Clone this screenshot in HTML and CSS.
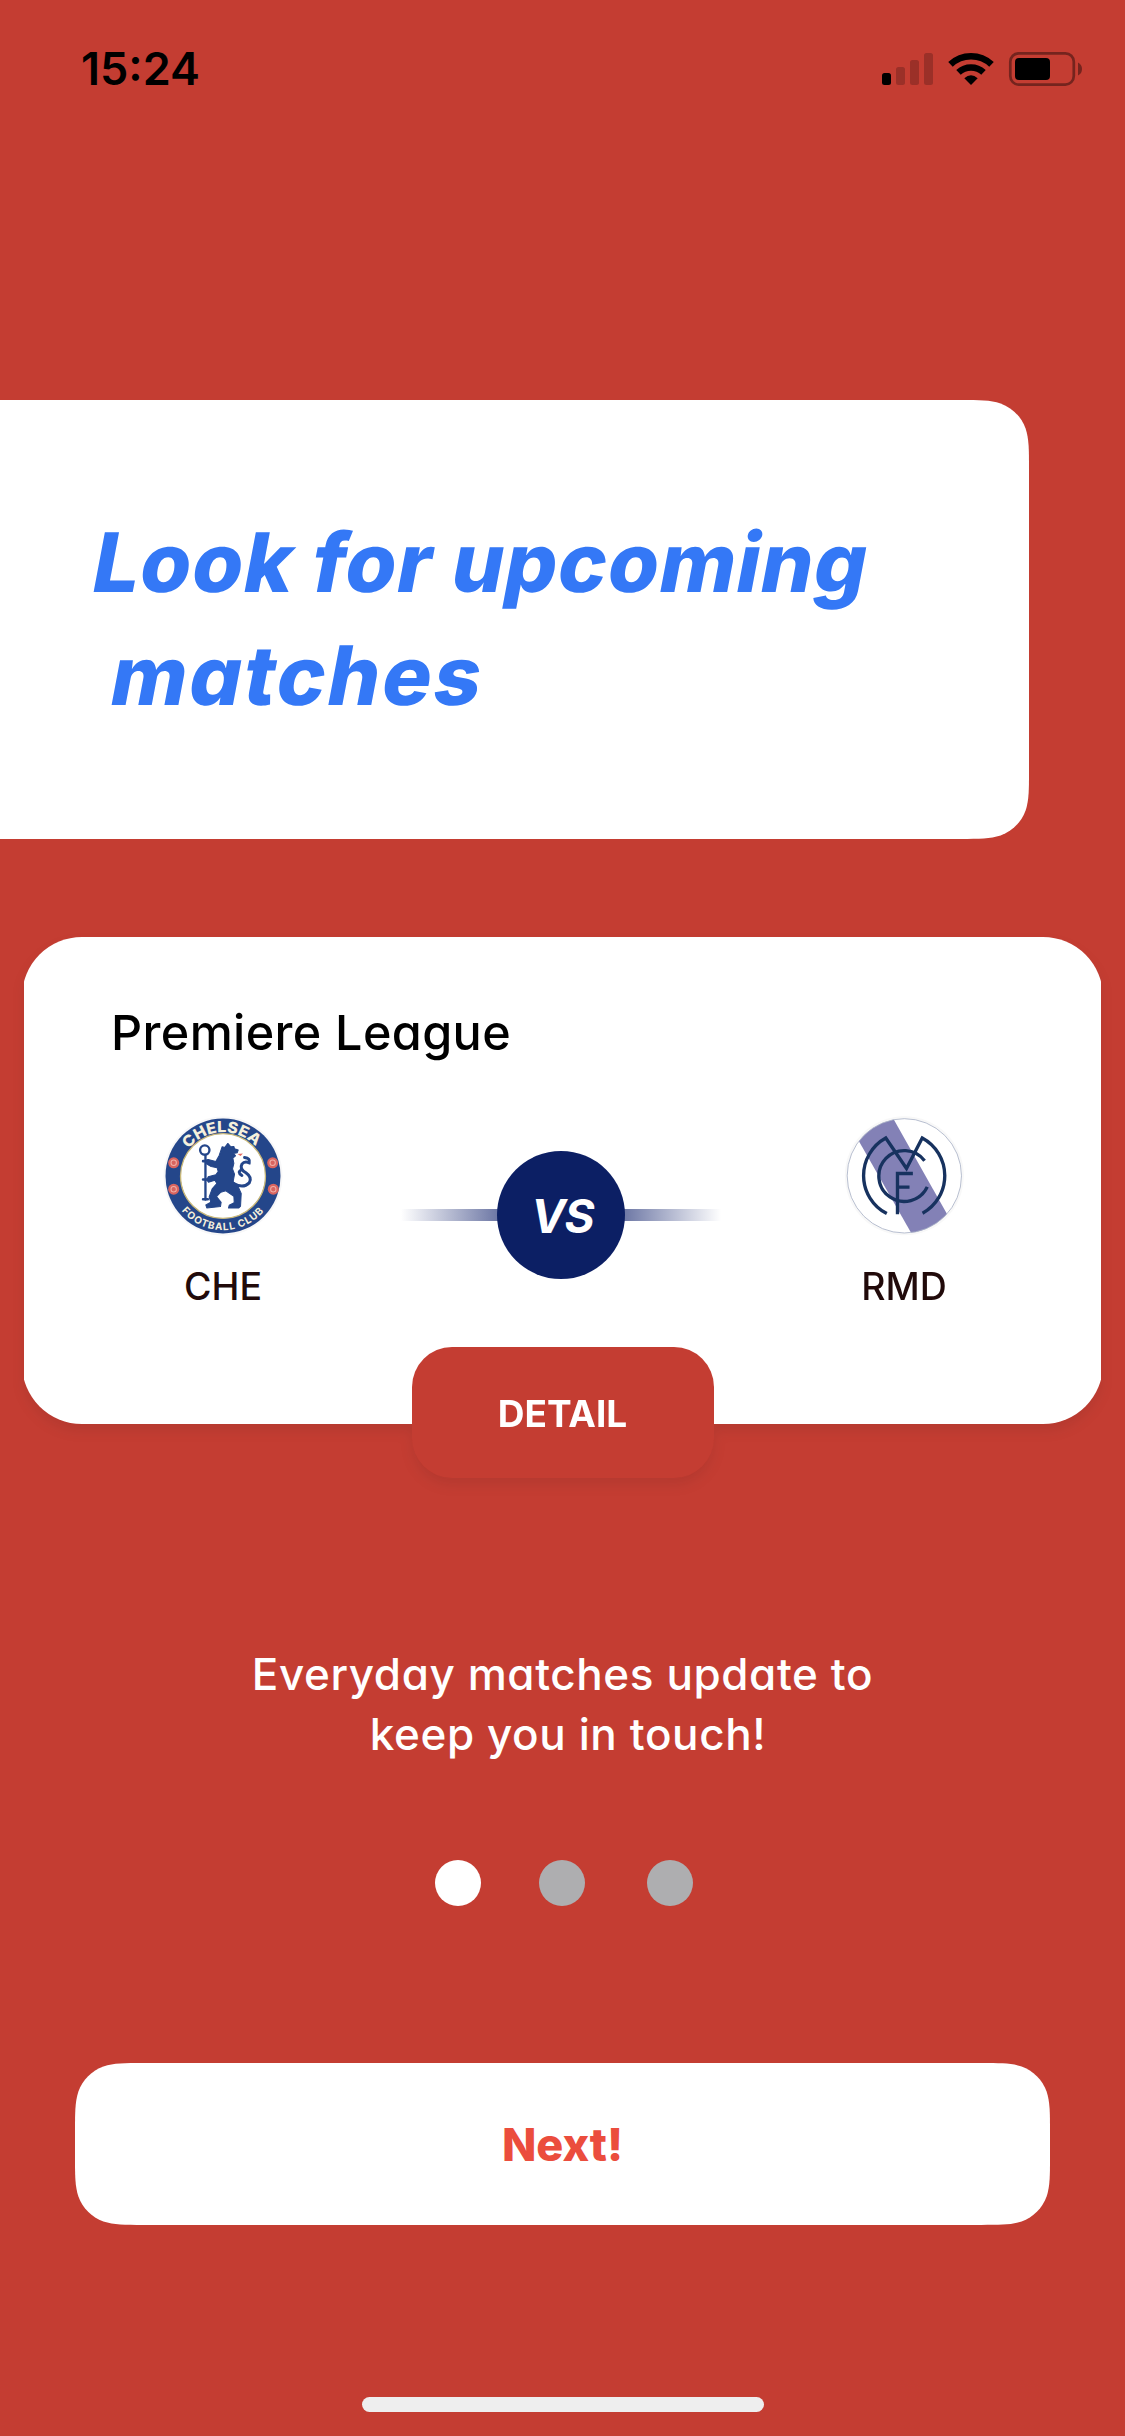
FILE: index.html
```html
<!DOCTYPE html>
<html lang="en">
<head>
<meta charset="utf-8">
<title>Upcoming matches</title>
<link rel="stylesheet" href="styles.css">
</head>
<body>
<div class="screen">
  <header class="status">
    <span class="status-time">15:24</span>
    <svg class="status-icons" viewBox="882 50 202 38" aria-hidden="true">
      <rect x="882" y="73" width="9" height="12" rx="2.5"/>
      <g fill="#9b3028">
        <rect x="896" y="67" width="9" height="18" rx="2.5"/>
        <rect x="910" y="60" width="9" height="25" rx="2.5"/>
        <rect x="924" y="53" width="9" height="32" rx="2.5"/>
      </g>
      <g fill="none" stroke="#000" stroke-width="6.6">
        <path d="M950.5 64.3A30 30 0 0 1 991.500 64.3"/>
        <path d="M958.500 72.400A18.500 18.500 0 0 1 983.500 72.400"/>
      </g>
      <path d="M964.300 78.300Q971 72 977.700 78.300L971 85Z"/>
      <rect x="1010.300" y="53.300" width="63.500" height="31.300" rx="8.500" fill="none" stroke="#75241e" stroke-width="2.700"/>
      <rect x="1015" y="58" width="35" height="22" rx="4"/>
      <path d="M1078 62.500Q1082 64.500 1082 69T1078 75.500Z" fill="#75241e"/>
    </svg>
  </header>

  <section class="hero">
    <h1 class="hero-title"><span class="hero-line line-one">Look for upcoming</span><span class="hero-line line-two">matches</span></h1>
  </section>

  <section class="match">
    <div class="match-card">
      <h2 class="league">Premiere League</h2>
      <div class="teams">
        <div class="team">
          <svg class="crest" viewBox="40 48 359 359" role="img" aria-label="Chelsea">
            <defs>
              <path id="arcTop" d="M116.300 146.800A131 131 0 0 1 322.700 146.800"/>
              <path id="arcBottom" d="M95.400 331.600A162 162 0 0 0 343.600 331.600"/>
            </defs>
            <circle cx="219.500" cy="227.500" r="178" fill="#f7f7f8"/>
            <circle cx="219.500" cy="227.500" r="172" fill="#24468a"/>
            <circle cx="219.500" cy="227.500" r="127" fill="#fff" stroke="#c9b878" stroke-width="4"/>
            <text class="crest-name" textLength="228" lengthAdjust="spacingAndGlyphs"><textPath href="#arcTop">CHELSEA</textPath></text>
            <text class="crest-club" textLength="280" lengthAdjust="spacing"><textPath href="#arcBottom">FOOTBALL CLUB</textPath></text>
            <g fill="#d9645f">
              <circle cx="72" cy="188" r="16.500"/><circle cx="72" cy="267" r="16.500"/>
              <circle cx="368" cy="188" r="16.500"/><circle cx="370" cy="267" r="16.500"/>
            </g>
            <g fill="none" stroke="#efb0a8" stroke-width="3">
              <circle cx="72" cy="188" r="8"/><circle cx="72" cy="267" r="8"/>
              <circle cx="368" cy="188" r="8"/><circle cx="370" cy="267" r="8"/>
            </g>
            <g fill="none" stroke="#24468a" stroke-linecap="round">
              <circle cx="165" cy="150" r="14" stroke-width="7"/>
              <path d="M167 165V298" stroke-width="7"/>
              <path d="M160 183L176 183M160 238H178M160 297H174" stroke-width="8"/>
              <path d="M252 250Q280 266 298 248Q308 232 288 218Q268 206 276 192Q284 182 298 188Q302 174 284 172M276 208Q260 216 276 226" stroke-width="9"/>
            </g>
            <path fill="#24468a" stroke="#24468a" stroke-width="3" stroke-linejoin="round" d="M217 140L225 142 234 130 243 140 252 139 254 146 265 150 262 158 251 160 257 167 249 174 252 190 248 206 254 222 250 244 266 262 274 280 272 318 267 323 236 323 238 315 253 307 252 288 228 272 213 276 200 289 214 306 212 319 171 323 168 314 183 306 178 290 187 266 201 250 195 240 176 246 171 239 175 230 198 224 205 214 202 203 184 199 171 192 166 181 175 178 198 184 208 166Z"/>
            <path d="M263 162L279 160 272 168Z" fill="#e46a62"/>
          </svg>
          <span class="team-code">CHE</span>
        </div>
        <div class="versus"><span class="versus-disc">VS</span></div>
        <div class="team">
          <svg class="crest" viewBox="40 48 359 359" role="img" aria-label="Madrid">
            <defs><clipPath id="disc"><circle cx="220.500" cy="227" r="171"/></clipPath></defs>
            <circle cx="220.500" cy="227" r="178" fill="#f8f8f8"/>
            <circle cx="220.500" cy="227" r="171" fill="#fff"/>
            <path d="M60 80L170 25 370 380 265 440Z" fill="#8381b6" clip-path="url(#disc)"/>
            <circle cx="220.500" cy="227" r="171" fill="none" stroke="#aab2c6" stroke-width="2.500"/>
            <g fill="none" stroke="#17325f" stroke-width="10">
              <path d="M168 340A128 128 0 0 1 165 114L227 205 274 114A128 128 0 0 1 275 339"/>
              <path d="M281 182A76 76 0 1 0 289 260"/>
              <path d="M200 342V220H246M200 261H236"/>
            </g>
          </svg>
          <span class="team-code">RMD</span>
        </div>
      </div>
    </div>
    <button class="detail">DETAIL</button>
  </section>

  <p class="tagline"><span>Everyday matches update to</span><span class="tag-two">keep you in touch!</span></p>

  <nav class="dots"><i class="dot dot-active"></i><i class="dot"></i><i class="dot dot-last"></i></nav>

  <button class="next">Next!</button>
  <div class="home-bar"></div>
</div>
</body>
</html>
```
FILE: styles.css
```css
* { box-sizing: border-box; }

body { margin: 0; background: #c43d32; }

.screen {
  display: flex;
  flex-direction: column;
  width: 1125px;
  height: 2436px;
  overflow: hidden;
  background: #c43d32;
  font-family: Inter, "Open Sans", sans-serif;
  font-feature-settings: "cv11";
}

h1, h2, p { margin: 0; }
button { border: 0; padding: 0; font: inherit; font-feature-settings: inherit; }

.status {
  display: flex;
  justify-content: space-between;
  align-items: flex-start;
  height: 400px;
  padding: 50px 41px 0 81px;
}
.status-time { font-size: 45px; font-weight: 600; line-height: 38px; }
.status-icons { width: 202px; height: 38px; }

.hero {
  width: 1029px;
  height: 439px;
  padding: 106px 0 0 89px;
  background: #fff;
  clip-path: path("M0 0H960.200C980 0 989.900 0 1000.600 3.400C1012.200 7.600 1021.400 16.800 1025.600 28.400C1029 39.100 1029 49 1029 68.800V370.200C1029 390 1029 399.900 1025.600 410.600C1021.400 422.200 1012.200 431.400 1000.600 435.600C989.900 439 980 439 960.200 439H0Z");
}
.hero-title {
  display: flex;
  flex-direction: column;
  align-items: flex-start;
  color: #3478f6;
  font-size: 82px;
  font-weight: 800;
  line-height: 113px;
  letter-spacing: 1px;
  white-space: nowrap;
}
.hero-line { transform: skewX(-10.700deg); transform-origin: 0 86px; }
.line-two { margin-left: 18px; letter-spacing: 2.300px; }

.match {
  display: flex;
  flex-direction: column;
  align-items: center;
  height: 693px;
  margin: 98px 24px 0;
  overflow-x: clip;
  filter: drop-shadow(0 7px 6px rgba(60, 30, 30, .1));
}
.match-card {
  flex: none;
  width: 1081px;
  height: 487px;
  padding: 67px 0 0;
  border-radius: 60px;
  background: #fff;
}
.league { padding-left: 89px; font-size: 48.500px; font-weight: 500; line-height: 58px; margin-bottom: -2px; letter-spacing: .4px; white-space: nowrap; }
.teams { display: flex; align-items: flex-start; padding: 56px 80px 0 130px; }
.team { display: flex; flex-direction: column; align-items: center; width: 142px; }
.crest { width: 120px; height: 120px; }
.crest-name { fill: #f5f0dc; font: 800 46px Inter, sans-serif; }
.crest-club { fill: #f5f0dc; font: 700 30px Inter, sans-serif; }
.team-code { margin-top: 28px; color: #210a0a; font-size: 37.500px; font-weight: 500; line-height: 46px; }
.versus {
  display: flex;
  justify-content: center;
  width: 320px;
  height: 128px;
  margin: 35px 112px 0 107px;
  background: linear-gradient(90deg, #fff 0, #6f79a6 30%, #6f79a6 70%, #fff 100%) center / 100% 12px no-repeat;
}
.versus-disc {
  display: flex;
  align-items: center;
  justify-content: center;
  width: 128px;
  height: 128px;
  padding: 2px 0 0 3px;
  border-radius: 50%;
  background: #0c1f64;
  color: #fff;
  font-size: 46px;
  font-style: italic;
  font-weight: 700;
  letter-spacing: -1px;
}

.detail {
  flex: none;
  width: 302px;
  height: 131px;
  margin-top: -77px;
  padding-top: 2px;
  border-radius: 40px;
  background: #c43d32;
  color: #fff;
  font-size: 37px;
  font-weight: 700;
}

.tagline {
  display: flex;
  flex-direction: column;
  height: 230px;
  padding-top: 14px;
  color: #fff;
  font-size: 44px;
  font-weight: 500;
  line-height: 60px;
  letter-spacing: .6px;
  align-items: center;
  white-space: nowrap;
}
.tag-two { margin-left: 11px; }

.dots { display: flex; justify-content: center; gap: 58px; height: 203px; padding-left: 3px; }
.dot { width: 46px; height: 46px; border-radius: 50%; background: #aeaeb0; }
.dot-active { background: #fff; }
.dot-last { margin-left: 4px; }

.next {
  flex: none;
  align-self: center;
  width: 975px;
  height: 162px;
  background: #fff;
  color: #eb4d3d;
  font-size: 45px;
  font-weight: 800;
  clip-path: path("M68.800 0H906.200C926 0 935.900 0 946.600 3.400C958.200 7.600 967.400 16.800 971.600 28.400C975 39.100 975 49 975 68.800V93.200C975 113 975 122.900 971.600 133.600C967.400 145.200 958.200 154.400 946.600 158.600C935.900 162 926 162 906.200 162H68.800C49 162 39.100 162 28.400 158.600C16.800 154.400 7.600 145.200 3.400 133.600C0 122.900 0 113 0 93.200V68.800C0 49 0 39.100 3.400 28.400C7.600 16.800 16.800 7.600 28.400 3.400C39.100 0 49 0 68.800 0Z");
}
.home-bar { width: 402px; height: 15px; margin: 172px 0 0 362px; border-radius: 8px; background: #eee; }
```
